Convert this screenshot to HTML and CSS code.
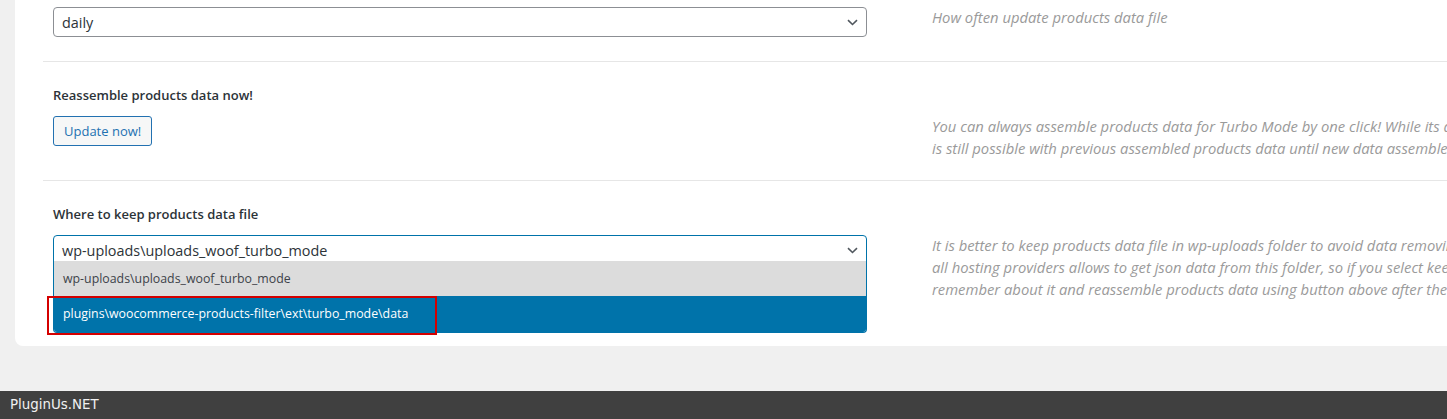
FILE: index.html
```html
<!DOCTYPE html>
<html lang="en">

<head>
    <title>Turbo Mode</title>
    <meta charset="UTF-8">
    <link rel="stylesheet" href="styles.css">
</head>

<body>
<div class="page">
    <div class="card">
        <!-- periodicity -->
        <div class="row row-first">
            <div class="control">
                <div class="select">
                    <span>daily</span>
                    <svg class="chevron" width="11" height="7" viewBox="0 0 11 7"><path d="M1 1.2l4.5 4.3 4.5-4.3" fill="none" stroke="#50575e" stroke-width="1.6"/></svg>
                </div>
            </div>
            <p class="desc">How often update products data file</p>
        </div>

        <!-- reassemble -->
        <div class="row">
            <div class="label">Reassemble products data now!</div>
            <div class="control">
                <button class="button">Update now!</button>
            </div>
            <p class="desc">You can always assemble products data for Turbo Mode by one click! While its assembling filtering<br>is still possible with previous assembled products data until new data assembled.</p>
        </div>

        <!-- storage -->
        <div class="row row-last">
            <div class="label">Where to keep products data file</div>
            <div class="control">
                <div class="dropdown">
                    <div class="select select-open">
                        <span>wp-uploads\uploads_woof_turbo_mode</span>
                        <svg class="chevron" width="11" height="7" viewBox="0 0 11 7"><path d="M1 1.2l4.5 4.3 4.5-4.3" fill="none" stroke="#50575e" stroke-width="1.6"/></svg>
                    </div>
                    <ul class="options">
                        <li class="option">wp-uploads\uploads_woof_turbo_mode</li>
                        <li class="option option-active">plugins\woocommerce-products-filter\ext\turbo_mode\data</li>
                    </ul>
                    <div class="mark"></div>
                </div>
            </div>
            <p class="desc">It is better to keep products data file in wp-uploads folder to avoid data removing while plugin updating. But not<br>all hosting providers allows to get json data from this folder, so if you select keep data in plugin folder,<br>remember about it and reassemble products data using button above after the plugin update!</p>
        </div>
    </div>
</div>

<div class="footer">PluginUs.NET</div>
</body>

</html>
```

FILE: styles.css
```css
/* page */
body {
    margin: 0;
    padding: 0;
    background-color: #f0f0f0;
    font-family: 'Open Sans', 'Liberation Sans', sans-serif;
    height: 419px;
    overflow: hidden;
}

.page {
    padding-left: 15px;
    overflow: hidden;
}

.card {
    background-color: #ffffff;
    border-radius: 0 0 8px 8px;
    margin-right: -40px;
    padding: 0 0 25px 28px;
    margin-bottom: 45px;
}

/* one setting */
.row {
    display: grid;
    grid-template-columns: 814px 1fr;
    column-gap: 65px;
    padding: 24px 10px 21px;
    border-bottom: 1px solid #e6e6e6;
}

.row-first {
    padding-top: 7px;
}

.row-last {
    border-bottom: none;
}

.label {
    grid-column: 1;
    grid-row: 1;
    font-size: 13px;
    font-weight: 600;
    line-height: 18px;
    color: #2c3338;
    margin-bottom: 12px;
}

.control {
    grid-column: 1;
    grid-row: 2;
}

.row-first .control,
.row-first .desc {
    grid-row: 1;
}

.desc {
    grid-column: 2;
    grid-row: 2;
    margin: -1px 0 0;
    font-size: 14.8px;
    font-style: italic;
    line-height: 22px;
    color: #9a9a9a;
    white-space: nowrap;
}

/* select */
.select {
    box-sizing: border-box;
    height: 30px;
    border: 1px solid #8c8f94;
    border-radius: 4px;
    padding: 0 8px;
    display: flex;
    align-items: center;
    justify-content: space-between;
    font-size: 14.4px;
    color: #2c3338;
    background-color: #ffffff;
    margin-bottom: 3px;
}

.chevron {
    display: block;
}

.dropdown {
    position: relative;
}

.select-open {
    border-color: #0073aa;
}

.options {
    position: absolute;
    top: 26px;
    left: 0;
    right: 0;
    margin: 0;
    padding: 0;
    list-style: none;
    border: 1px solid #0073aa;
    border-top: none;
    border-radius: 0 0 4px 4px;
    overflow: hidden;
    font-size: 12.35px;
}

.option {
    height: 35px;
    line-height: 35px;
    padding-left: 9px;
    background-color: #dcdcdc;
    color: #3c434a;
}

.option-active {
    height: 36px;
    line-height: 36px;
    background-color: #0073aa;
    color: #ffffff;
}

/* red frame from the screenshot */
.mark {
    position: absolute;
    top: 61px;
    left: -6px;
    width: 390px;
    height: 39px;
    box-sizing: border-box;
    border: 2px solid #d40000;
}

/* button */
.button {
    height: 30px;
    padding: 0 10px;
    font-family: 'Open Sans', 'Liberation Sans', sans-serif;
    font-size: 13px;
    color: #2271b1;
    background-color: #f6f7f7;
    border: 1px solid #2271b1;
    border-radius: 3px;
    cursor: pointer;
}

/* footer */
.footer {
    height: 28px;
    line-height: 28px;
    background-color: #404040;
    color: #f0f0f0;
    font-family: 'DejaVu Sans', sans-serif;
    font-size: 13.4px;
    padding-left: 10px;
}
```
